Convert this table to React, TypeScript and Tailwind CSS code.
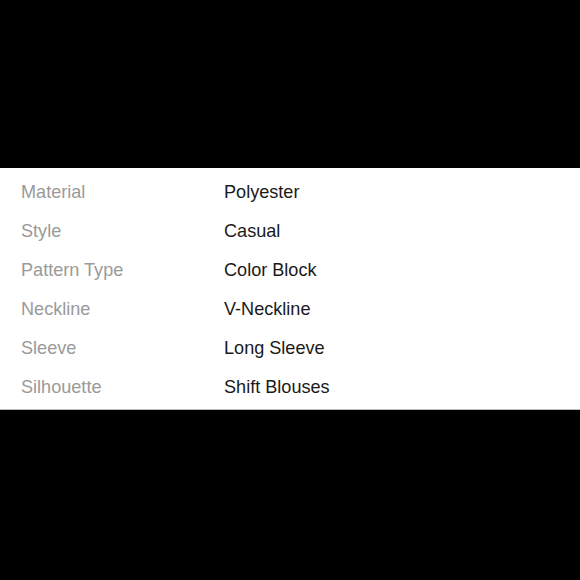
export default function App() {
  const rows: [string, string][] = [
    ["Material", "Polyester"],
    ["Style", "Casual"],
    ["Pattern Type", "Color Block"],
    ["Neckline", "V-Neckline"],
    ["Sleeve", "Long Sleeve"],
    ["Silhouette", "Shift Blouses"],
  ];
  return (
    <div className="h-[580px] w-[580px] bg-black pt-[168px]" style={{ fontFamily: '"Liberation Sans", Arial, sans-serif' }}>
      <div className="bg-white pt-[4.5px] h-[242px] border-b border-[#bbbbbb]">
        {rows.map(([k, v]) => (
          <div key={k} className="flex items-center h-[39.2px] pl-[21px] text-[18.1px]">
            <div className="w-[203px] text-[#9a9a9a]">{k}</div>
            <div className="text-[#1a1a1a]">{v}</div>
          </div>
        ))}
      </div>
    </div>
  );
}
